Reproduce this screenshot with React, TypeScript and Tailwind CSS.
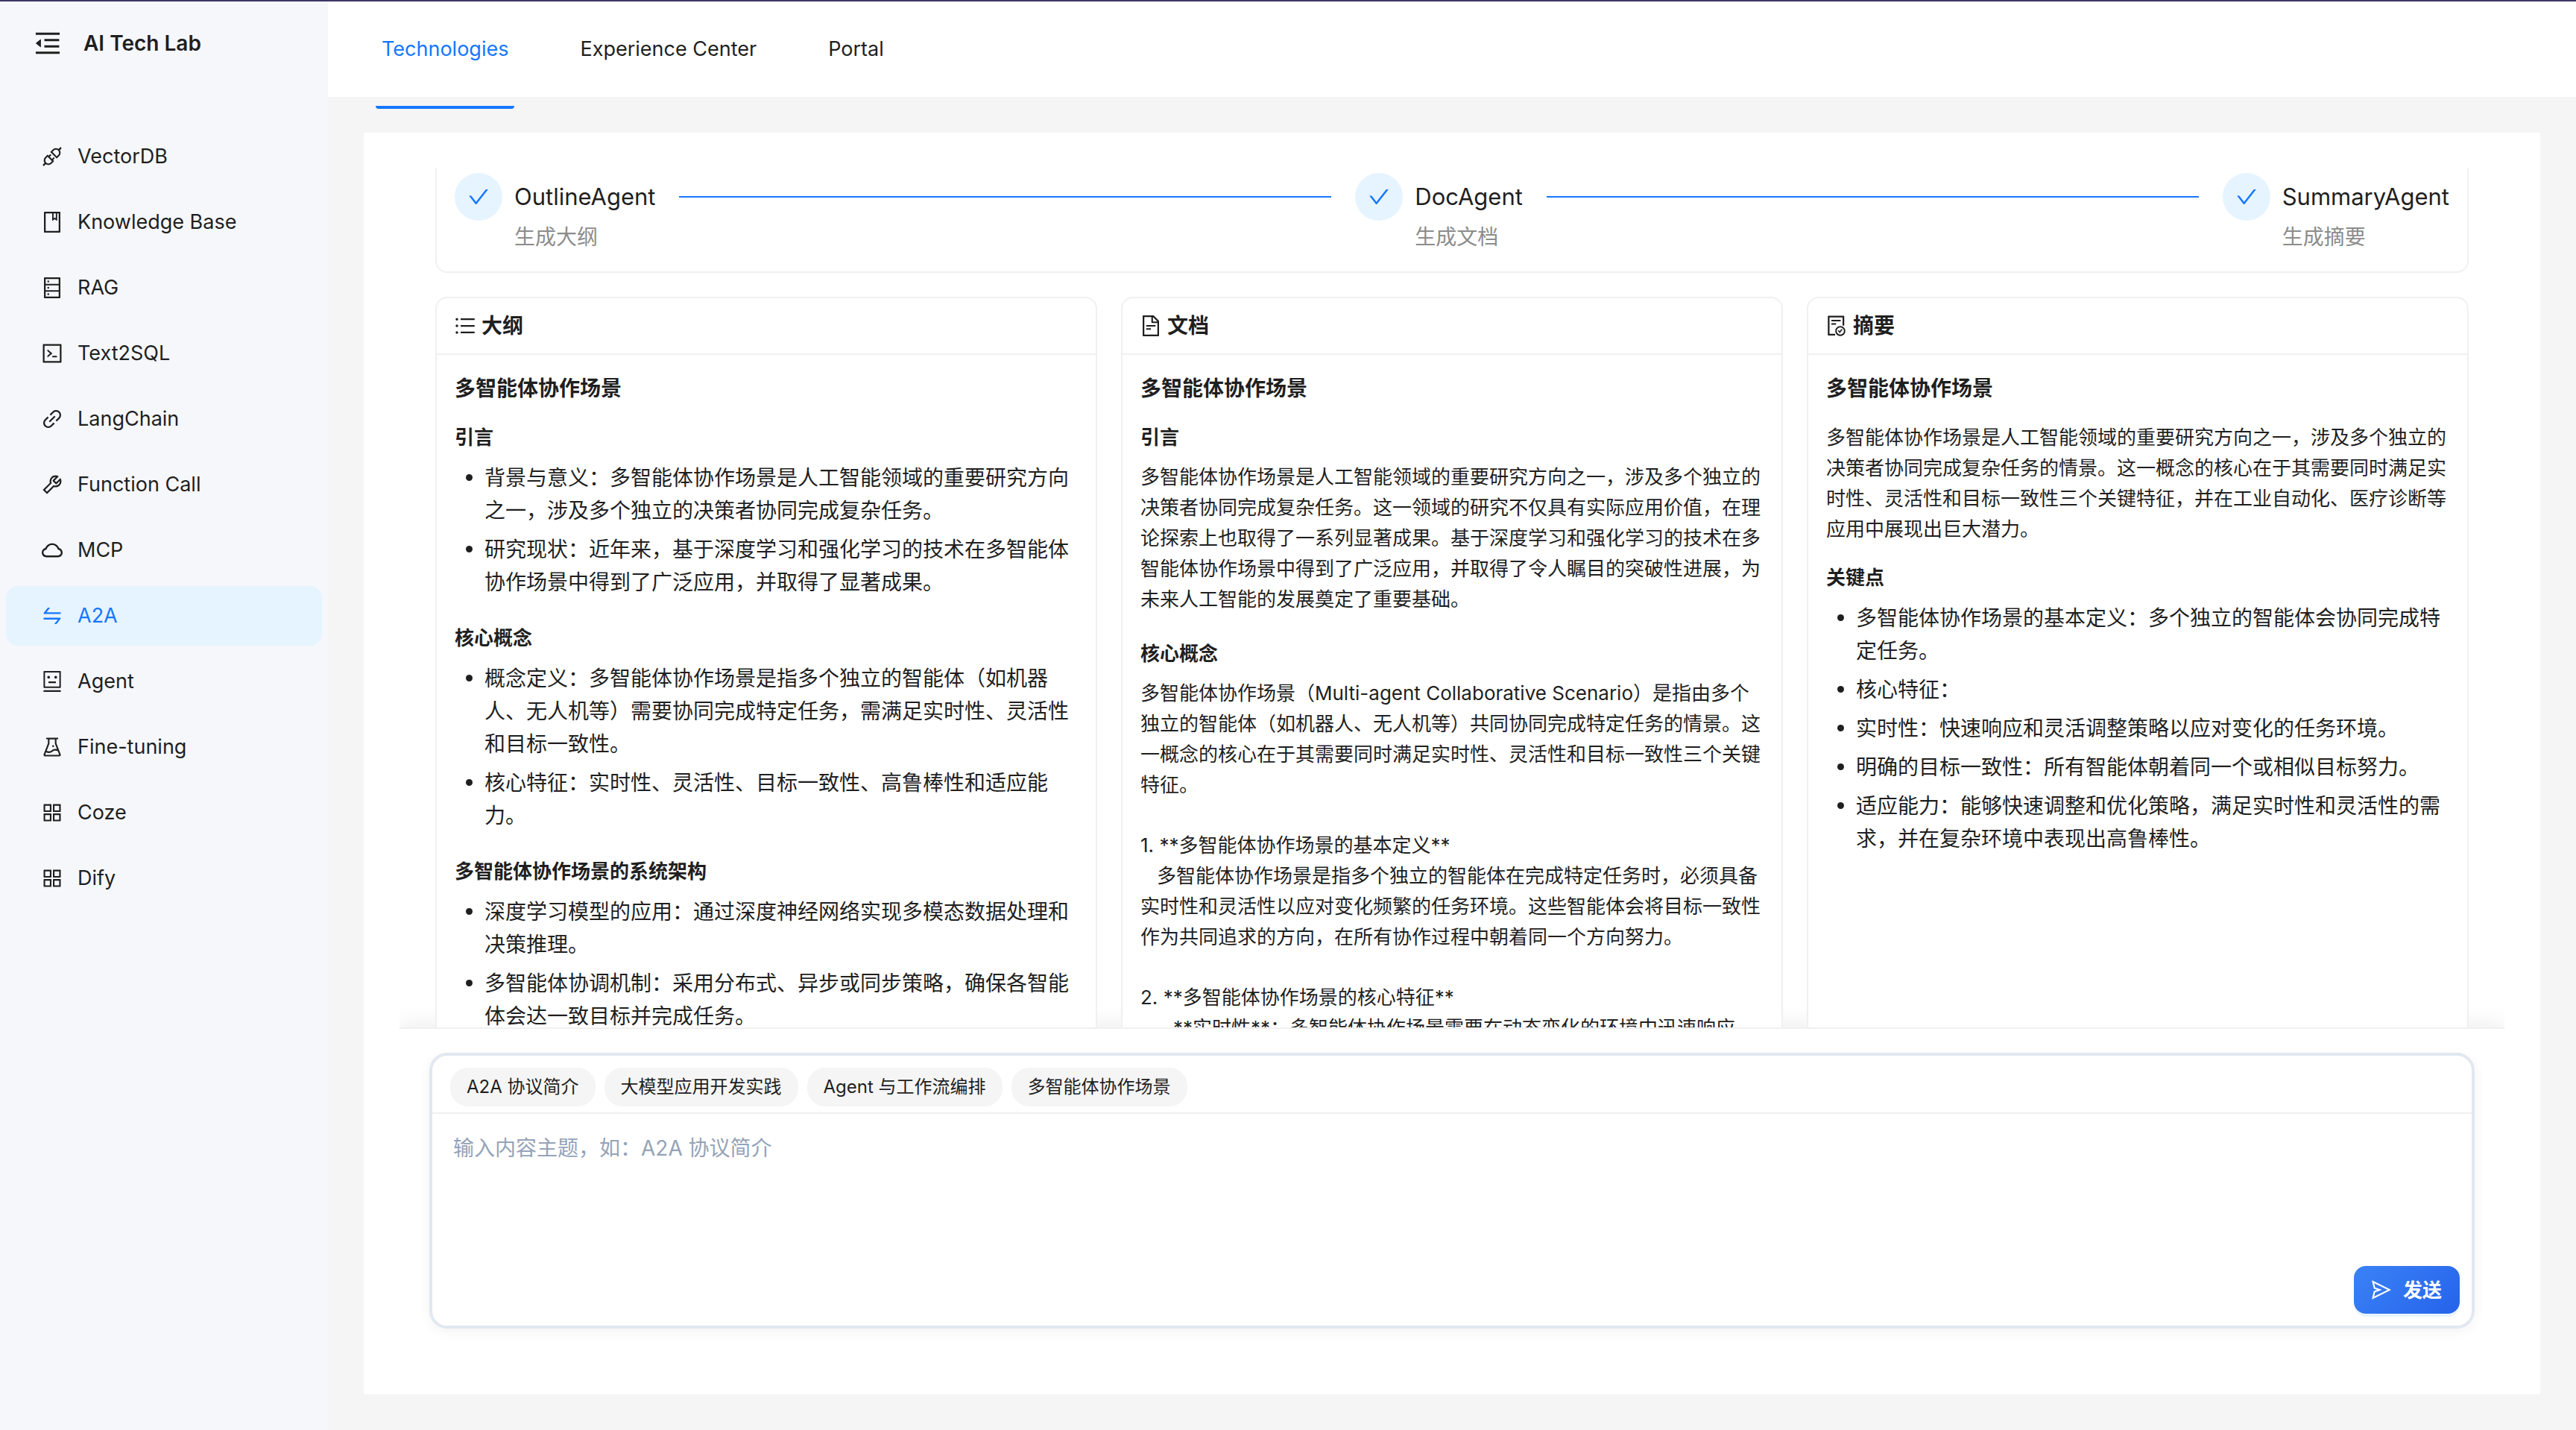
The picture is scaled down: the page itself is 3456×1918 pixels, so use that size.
import type { ReactNode } from 'react';
import type { IconType } from 'react-icons';
import {
  AiOutlineApi,
  AiOutlineAppstore,
  AiOutlineBook,
  AiOutlineCheck,
  AiOutlineCloud,
  AiOutlineCode,
  AiOutlineDatabase,
  AiOutlineExperiment,
  AiOutlineFileDone,
  AiOutlineFileText,
  AiOutlineLink,
  AiOutlineMenuFold,
  AiOutlineRobot,
  AiOutlineSend,
  AiOutlineSwap,
  AiOutlineTool,
  AiOutlineUnorderedList,
} from 'react-icons/ai';

// Ant Design draws its icons without the outer margin of the 1024 grid
const iconBox = '64 64 896 896';

const menu: { label: string; icon: IconType; active?: boolean }[] = [
  { label: 'VectorDB', icon: AiOutlineApi },
  { label: 'Knowledge Base', icon: AiOutlineBook },
  { label: 'RAG', icon: AiOutlineDatabase },
  { label: 'Text2SQL', icon: AiOutlineCode },
  { label: 'LangChain', icon: AiOutlineLink },
  { label: 'Function Call', icon: AiOutlineTool },
  { label: 'MCP', icon: AiOutlineCloud },
  { label: 'A2A', icon: AiOutlineSwap, active: true },
  { label: 'Agent', icon: AiOutlineRobot },
  { label: 'Fine-tuning', icon: AiOutlineExperiment },
  { label: 'Coze', icon: AiOutlineAppstore },
  { label: 'Dify', icon: AiOutlineAppstore },
];

const steps = [
  { title: 'OutlineAgent', description: '生成大纲' },
  { title: 'DocAgent', description: '生成文档' },
  { title: 'SummaryAgent', description: '生成摘要' },
];

const outline = [
  {
    heading: '引言',
    items: [
      '背景与意义：多智能体协作场景是人工智能领域的重要研究方向之一，涉及多个独立的决策者协同完成复杂任务。',
      '研究现状：近年来，基于深度学习和强化学习的技术在多智能体协作场景中得到了广泛应用，并取得了显著成果。',
    ],
  },
  {
    heading: '核心概念',
    items: [
      '概念定义：多智能体协作场景是指多个独立的智能体（如机器人、无人机等）需要协同完成特定任务，需满足实时性、灵活性和目标一致性。',
      '核心特征：实时性、灵活性、目标一致性、高鲁棒性和适应能力。',
    ],
  },
  {
    heading: '多智能体协作场景的系统架构',
    items: [
      '深度学习模型的应用：通过深度神经网络实现多模态数据处理和决策推理。',
      '多智能体协调机制：采用分布式、异步或同步策略，确保各智能体会达一致目标并完成任务。',
    ],
  },
];

const doc = [
  {
    heading: '引言',
    paragraphs: [
      '多智能体协作场景是人工智能领域的重要研究方向之一，涉及多个独立的决策者协同完成复杂任务。这一领域的研究不仅具有实际应用价值，在理论探索上也取得了一系列显著成果。基于深度学习和强化学习的技术在多智能体协作场景中得到了广泛应用，并取得了令人瞩目的突破性进展，为未来人工智能的发展奠定了重要基础。',
    ],
  },
  {
    heading: '核心概念',
    paragraphs: [
      '多智能体协作场景（Multi-agent Collaborative Scenario）是指由多个独立的智能体（如机器人、无人机等）共同协同完成特定任务的情景。这一概念的核心在于其需要同时满足实时性、灵活性和目标一致性三个关键特征。',
      '1. **多智能体协作场景的基本定义**\n   多智能体协作场景是指多个独立的智能体在完成特定任务时，必须具备实时性和灵活性以应对变化频繁的任务环境。这些智能体会将目标一致性作为共同追求的方向，在所有协作过程中朝着同一个方向努力。',
      '2. **多智能体协作场景的核心特征**\n      **实时性**：多智能体协作场景需要在动态变化的环境中迅速响应',
    ],
  },
];

const keyPoints = [
  '多智能体协作场景的基本定义：多个独立的智能体会协同完成特定任务。',
  '核心特征：',
  '实时性：快速响应和灵活调整策略以应对变化的任务环境。',
  '明确的目标一致性：所有智能体朝着同一个或相似目标努力。',
  '适应能力：能够快速调整和优化策略，满足实时性和灵活性的需求，并在复杂环境中表现出高鲁棒性。',
];

const prompts = ['A2A 协议简介', '大模型应用开发实践', 'Agent 与工作流编排', '多智能体协作场景'];

function Sidebar() {
  return (
    <aside className="w-[440px] shrink-0 bg-[#f6f7fb]">
      <div className="flex h-28 items-center gap-[30px] pl-[46px]">
        <button type="button" aria-label="Collapse menu">
          <AiOutlineMenuFold viewBox={iconBox} className="size-9" />
        </button>
        <h1 className="text-[28px] font-semibold">AI Tech Lab</h1>
      </div>
      <nav className="mt-14 flex flex-col gap-2 px-2">
        {menu.map(({ label, icon: Icon, active }) => (
          <a
            key={label}
            href="#"
            className={`flex h-20 items-center gap-5 rounded-2xl pl-12 text-[27px] ${
              active ? 'bg-[#e6f4ff] text-[#1677ff]' : ''
            }`}
          >
            <Icon viewBox={iconBox} className="size-7" />
            {label}
          </a>
        ))}
      </nav>
    </aside>
  );
}

function Header() {
  return (
    <header className="flex h-32 shrink-0 gap-20 bg-white pl-16 text-[27px]">
      <a
        href="#"
        className="h-36 rounded-b-sm border-b-4 border-[#1677ff] px-2 leading-[128px] text-[#1677ff]"
      >
        Technologies
      </a>
      <a href="#" className="px-2 leading-[128px]">
        Experience Center
      </a>
      <a href="#" className="px-2 leading-[128px]">
        Portal
      </a>
    </header>
  );
}

function Steps() {
  return (
    <ol className="-mt-5 flex gap-8 rounded-2xl border-2 border-[#f0f0f0] bg-white p-6">
      {steps.map((step, i) => (
        <li
          key={step.title}
          className={`flex items-start gap-4 ${i < steps.length - 1 ? 'flex-auto' : ''}`}
        >
          <span className="flex size-16 items-center justify-center rounded-full bg-[#e6f4ff] text-[#1677ff]">
            <AiOutlineCheck viewBox={iconBox} className="size-7" />
          </span>
          <div className="flex-1">
            <div className="flex items-center gap-8 text-[31px] leading-[64px]">
              {step.title}
              {i < steps.length - 1 && <span className="h-0.5 flex-1 bg-[#1677ff]" />}
            </div>
            <div className="text-[28px] leading-[44px] text-[#8c8c8c]">{step.description}</div>
          </div>
        </li>
      ))}
    </ol>
  );
}

function Card({ icon: Icon, title, children }: { icon: IconType; title: string; children: ReactNode }) {
  return (
    <section className="rounded-2xl border-2 border-[#f0f0f0] bg-white">
      <h2 className="flex h-[76px] items-center gap-2 border-b-2 border-[#f0f0f0] px-6 text-[28px] font-semibold">
        <Icon viewBox={iconBox} className="size-7" />
        {title}
      </h2>
      <div className="p-6">
        <h3 className="mb-6 text-[28px] leading-[42px] font-semibold">多智能体协作场景</h3>
        {children}
      </div>
    </section>
  );
}

function Heading({ children }: { children: ReactNode }) {
  return <h4 className="mb-3 text-[26px] leading-[41px] font-semibold">{children}</h4>;
}

function BulletList({ items }: { items: string[] }) {
  return (
    <ul className="flex flex-col gap-2 text-[28px] leading-[44px]">
      {items.map((item) => (
        <li key={item} className="flex gap-4">
          <span className="mt-[17px] ml-[15px] size-[9px] shrink-0 rounded-full bg-[#1f1f1f]" />
          <span>{item}</span>
        </li>
      ))}
    </ul>
  );
}

function Composer() {
  return (
    <div className="border-t-2 border-[#f0f0f0] bg-white px-10 pt-8 pb-10 shadow-[0_-8px_24px_rgba(0,0,0,0.06)]">
      <form className="relative rounded-3xl border-4 border-[#e2e8f0] bg-white shadow-[0_4px_16px_rgba(0,0,0,0.05)]">
        <div className="flex gap-3 border-b-2 border-[#f0f0f0] px-6 pt-4 pb-2">
          {prompts.map((prompt) => (
            <button
              key={prompt}
              type="button"
              className="h-[52px] rounded-3xl bg-[#f5f5f5] px-[22px] text-2xl"
            >
              {prompt}
            </button>
          ))}
        </div>
        <textarea
          aria-label="内容主题"
          placeholder="输入内容主题，如：A2A 协议简介"
          className="block h-[284px] w-full resize-none rounded-b-3xl px-7 py-6 text-[28px] leading-[44px] outline-none placeholder:text-[#94a3b8]"
        />
        <button
          type="button"
          className="absolute right-4 bottom-4 flex h-16 items-center gap-4 rounded-2xl bg-[linear-gradient(135deg,#3b82f6,#2563eb)] px-6 text-[26px] font-semibold text-white shadow-[0_4px_0_rgba(5,145,255,0.1)]"
        >
          <AiOutlineSend viewBox={iconBox} className="size-[26px]" />
          发送
        </button>
      </form>
    </div>
  );
}

export default function App() {
  return (
    <div
      lang="zh-CN"
      className="flex h-screen overflow-hidden border-t-2 border-[#3d3866] bg-[#f5f5f5] font-['Inter','Noto_Sans_CJK_SC',sans-serif] text-[#1f1f1f]"
    >
      <Sidebar />
      <div className="flex min-w-0 flex-1 flex-col">
        <Header />
        <main className="m-12 flex min-h-0 flex-1 flex-col bg-white p-12">
          <div className="flex min-h-0 flex-1 flex-col overflow-hidden">
            <div className="relative z-10 min-h-0 flex-1 overflow-hidden px-12">
              <Steps />
              <div className="mt-8 grid grid-cols-3 gap-8">
                <Card icon={AiOutlineUnorderedList} title="大纲">
                  <div className="flex flex-col gap-8">
                    {outline.map((section) => (
                      <div key={section.heading}>
                        <Heading>{section.heading}</Heading>
                        <BulletList items={section.items} />
                      </div>
                    ))}
                  </div>
                </Card>
                <Card icon={AiOutlineFileText} title="文档">
                  <div className="flex flex-col gap-8">
                    {doc.map((section) => (
                      <div key={section.heading}>
                        <Heading>{section.heading}</Heading>
                        <div className="flex flex-col gap-10 text-[26px] leading-[41px] whitespace-pre-wrap">
                          {section.paragraphs.map((text) => (
                            <p key={text}>{text}</p>
                          ))}
                        </div>
                      </div>
                    ))}
                  </div>
                </Card>
                <Card icon={AiOutlineFileDone} title="摘要">
                  <p className="mb-6 text-[26px] leading-[41px]">
                    多智能体协作场景是人工智能领域的重要研究方向之一，涉及多个独立的决策者协同完成复杂任务的情景。这一概念的核心在于其需要同时满足实时性、灵活性和目标一致性三个关键特征，并在工业自动化、医疗诊断等应用中展现出巨大潜力。
                  </p>
                  <Heading>关键点</Heading>
                  <BulletList items={keyPoints} />
                </Card>
              </div>
            </div>
            <Composer />
          </div>
        </main>
      </div>
    </div>
  );
}
